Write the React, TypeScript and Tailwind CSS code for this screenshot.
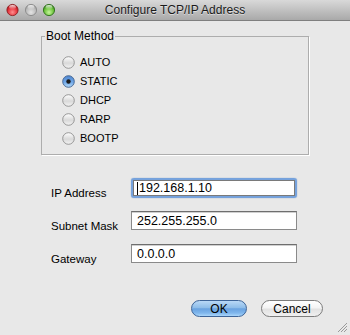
import React from "react";

function TrafficLights() {
  return (
    <svg width="60" height="20" viewBox="0 0 60 20" className="absolute left-0 top-0">
      <defs>
        <radialGradient id="tlRed" cx="50%" cy="70%" r="60%">
          <stop offset="0%" stopColor="#ff8f8f" />
          <stop offset="70%" stopColor="#e3313a" />
          <stop offset="100%" stopColor="#b8151d" />
        </radialGradient>
        <radialGradient id="tlGray" cx="50%" cy="70%" r="60%">
          <stop offset="0%" stopColor="#e4e4e4" />
          <stop offset="70%" stopColor="#bdbdbd" />
          <stop offset="100%" stopColor="#9e9e9e" />
        </radialGradient>
        <radialGradient id="tlGreen" cx="50%" cy="70%" r="60%">
          <stop offset="0%" stopColor="#c6f59c" />
          <stop offset="70%" stopColor="#6cc23b" />
          <stop offset="100%" stopColor="#3f8f20" />
        </radialGradient>
        <linearGradient id="tlShine" x1="0" y1="0" x2="0" y2="1">
          <stop offset="0%" stopColor="#ffffff" stopOpacity="0.85" />
          <stop offset="100%" stopColor="#ffffff" stopOpacity="0" />
        </linearGradient>
      </defs>
      <circle cx="12.5" cy="10" r="5.6" fill="url(#tlRed)" stroke="#8c1f23" strokeWidth="0.9" />
      <ellipse cx="12.5" cy="7.2" rx="3.4" ry="2.1" fill="url(#tlShine)" />
      <circle cx="31" cy="10" r="5.6" fill="url(#tlGray)" stroke="#8a8a8a" strokeWidth="0.9" />
      <ellipse cx="31" cy="7.2" rx="3.4" ry="2.1" fill="url(#tlShine)" />
      <circle cx="49" cy="10" r="5.6" fill="url(#tlGreen)" stroke="#2f6f1c" strokeWidth="0.9" />
      <ellipse cx="49" cy="7.2" rx="3.4" ry="2.1" fill="url(#tlShine)" />
    </svg>
  );
}

function Radio({ checked }: { checked?: boolean }) {
  return (
    <svg width="13" height="13" viewBox="0 0 13 13" className="shrink-0">
      <defs>
        <linearGradient id="rOff" x1="0" y1="0" x2="0" y2="1">
          <stop offset="0%" stopColor="#ffffff" />
          <stop offset="55%" stopColor="#d9d9d9" />
          <stop offset="100%" stopColor="#f4f4f4" />
        </linearGradient>
        <linearGradient id="rOn" x1="0" y1="0" x2="0" y2="1">
          <stop offset="0%" stopColor="#4f86cf" />
          <stop offset="55%" stopColor="#6fa6e6" />
          <stop offset="100%" stopColor="#b6dcfb" />
        </linearGradient>
      </defs>
      {checked ? (
        <>
          <circle cx="6.5" cy="6.5" r="5.8" fill="url(#rOn)" stroke="#3b5d8c" strokeWidth="0.9" />
          <circle cx="6.5" cy="6.5" r="2.2" fill="#1b1b1b" />
        </>
      ) : (
        <circle cx="6.5" cy="6.5" r="5.8" fill="url(#rOff)" stroke="#8d8d8d" strokeWidth="0.9" />
      )}
    </svg>
  );
}

function Grip() {
  return (
    <svg width="12" height="12" viewBox="0 0 12 12" className="absolute right-[2px] bottom-[2px]">
      <line x1="11" y1="2" x2="2" y2="11" stroke="#9a9a9a" strokeWidth="1" />
      <line x1="11" y1="5" x2="5" y2="11" stroke="#9a9a9a" strokeWidth="1" />
      <line x1="11" y1="8" x2="8" y2="11" stroke="#9a9a9a" strokeWidth="1" />
    </svg>
  );
}

const options = ["AUTO", "STATIC", "DHCP", "RARP", "BOOTP"];

export default function App() {
  return (
    <div className="w-[350px] h-[335px] bg-[#e8e8e8] flex flex-col relative overflow-hidden text-black font-['Liberation_Sans',Arial,sans-serif]">
      <div className="h-[21px] shrink-0 bg-gradient-to-b from-[#d9d9d9] to-[#a9a9a9] border-b border-[#7f7f7f] relative flex items-center justify-center">
        <TrafficLights />
        <span className="text-[12px] leading-[14px] text-[#1a1a1a] [text-shadow:0_1px_0_rgba(255,255,255,0.5)]">
          Configure TCP/IP Address
        </span>
      </div>

      <div className="ml-[41px] mt-[15px] w-[268px] h-[119px] border border-[#adadad] shadow-[1px_1px_0_#ffffff] relative">
        <span className="absolute left-[3px] top-[-8px] px-[1px] bg-[#e8e8e8] text-[12px] leading-[14px]">
          Boot Method
        </span>
        <div className="flex flex-col pt-[16px] pl-[20px]">
          {options.map((o) => (
            <div key={o} className="h-[19px] flex items-center gap-[5px]">
              <Radio checked={o === "STATIC"} />
              <span className="text-[11px] leading-[13px]">{o}</span>
            </div>
          ))}
        </div>
      </div>

      <div className="ml-[51px] mt-[23px] flex flex-col gap-[13px]">
        <div className="h-[20px] flex items-start">
          <span className="w-[80px] pt-[8px] text-[11.5px] leading-[14px]">IP Address</span>
          <div className="w-[166px] h-[20px] rounded-[3px] border-[2px] border-[#76a2dc] shadow-[0_0_1px_#4f80c4] flex">
            <div className="flex-1 bg-white border border-[#7a7a7a] flex items-center pl-[3px]">
              <span className="w-px h-[13px] bg-black mr-[1px]" />
              <span className="text-[12.5px] leading-[14px]">192.168.1.10</span>
            </div>
          </div>
        </div>
        <div className="h-[20px] flex items-start">
          <span className="w-[80px] pt-[8px] text-[11.5px] leading-[14px]">Subnet Mask</span>
          <div className="w-[166px] h-[19px] bg-white border border-[#8a8a8a] border-t-[#6e6e6e] shadow-[inset_0_1px_0_#d0d0d0] flex items-center pl-[5px]">
            <span className="text-[12.5px] leading-[14px]">252.255.255.0</span>
          </div>
        </div>
        <div className="h-[20px] flex items-start">
          <span className="w-[80px] pt-[8px] text-[11.5px] leading-[14px]">Gateway</span>
          <div className="w-[166px] h-[19px] bg-white border border-[#8a8a8a] border-t-[#6e6e6e] shadow-[inset_0_1px_0_#d0d0d0] flex items-center pl-[5px]">
            <span className="text-[12.5px] leading-[14px]">0.0.0.0</span>
          </div>
        </div>
      </div>

      <div className="mt-[36px] flex justify-end gap-[14px] pr-[27px]">
        <div className="w-[56px] h-[17px] rounded-full border border-[#3d6498] bg-[linear-gradient(to_bottom,#b9d8f6_0%,#8ebde9_45%,#69a2e0_52%,#7fb6ec_80%,#aad6fb_100%)] flex items-center justify-center text-[12px] leading-[14px]">
          OK
        </div>
        <div className="w-[62px] h-[17px] rounded-full border border-[#7c7c7c] bg-[linear-gradient(to_bottom,#ffffff_0%,#f4f4f4_45%,#e2e2e2_55%,#f0f0f0_100%)] flex items-center justify-center text-[12px] leading-[14px]">
          Cancel
        </div>
      </div>

      <Grip />
    </div>
  );
}
